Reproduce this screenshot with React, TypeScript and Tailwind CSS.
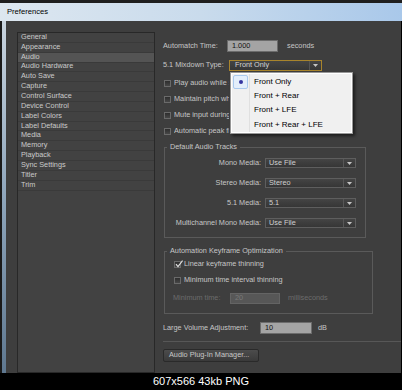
import type { ReactNode } from 'react'

const categories = [
  'General',
  'Appearance',
  'Audio',
  'Audio Hardware',
  'Auto Save',
  'Capture',
  'Control Surface',
  'Device Control',
  'Label Colors',
  'Label Defaults',
  'Media',
  'Memory',
  'Playback',
  'Sync Settings',
  'Titler',
  'Trim',
]

const mixdownOptions = ['Front Only', 'Front + Rear', 'Front + LFE', 'Front + Rear + LFE']

const audioTracks = [
  ['Mono Media:', 'Use File'],
  ['Stereo Media:', 'Stereo'],
  ['5.1 Media:', '5.1'],
  ['Multichannel Mono Media:', 'Use File'],
]

function Arrow() {
  return (
    <svg width="5" height="3" viewBox="0 0 5 3">
      <path d="M0 0H5L2.5 3Z" fill="#c4c4c4" />
    </svg>
  )
}

function Checkbox({ checked = false }: { checked?: boolean }) {
  return (
    <span className="relative block h-[7px] w-[7px] shrink-0 border border-[#6a6a6a] bg-gradient-to-b from-[#2e2e2e] to-[#474747]">
      {checked && (
        <svg className="absolute -top-[2px] left-0" width="8" height="8" viewBox="0 0 8 8">
          <path d="M1 4.2L3 6.6L7.6 0.6" stroke="#e0e0e0" strokeWidth="1.2" fill="none" />
        </svg>
      )}
    </span>
  )
}

function CheckRow({
  label,
  checked,
  className,
  clip,
}: {
  label: string
  checked?: boolean
  className: string
  clip?: boolean
}) {
  return (
    <div className={`flex h-[16px] items-center whitespace-nowrap ${className}`}>
      <Checkbox checked={checked} />
      <span className={`ml-[3px] ${clip ? 'w-[55px] overflow-hidden' : ''}`}>{label}</span>
    </div>
  )
}

function Group({ title, className, children }: { title: string; className: string; children: ReactNode }) {
  return (
    <fieldset className={`ml-[1px] border border-[#5a5a5a] ${className}`}>
      <legend className="ml-[2px] px-[3px] leading-[10px] text-[#c6c6c6]">{title}</legend>
      {children}
    </fieldset>
  )
}

export default function App() {
  return (
    <div className="flex h-[390px] w-[402px] flex-col overflow-hidden bg-black font-['Liberation_Sans',Arial,sans-serif] text-[7.3px] text-[#c6c6c6]">
      <div className="flex h-[373px] flex-col">
        <div className="h-[3px] bg-[#1f1f1f]" />
        <div className="flex h-[18px] items-center bg-gradient-to-r from-[#dde7f0] via-[#c9dbec] to-[#a9c8ea] pl-[7px] pr-[1px]">
          <span className="text-[7.6px] text-black">Preferences</span>
        </div>

        <div className="flex min-h-0 flex-1">
          <div className="flex w-[6px]">
            <div className="w-[2px] bg-[#1a1a1a]" />
            <div className="flex-1 bg-gradient-to-b from-[#c8d4df] via-[#8ea5bb] to-[#5f7890]" />
          </div>

          <div className="flex min-w-0 flex-1 bg-[#3e3e3e]">
            <div className="pl-[11px] pt-[11px]">
              <ul className="h-full w-[138px] border border-[#282828] bg-[#424242] text-[#cacaca]">
                {categories.map((name) => (
                  <li
                    key={name}
                    className={`flex h-[9.85px] items-center border-b border-[#3a3a3a] pl-[3px] ${
                      name === 'Audio' ? 'bg-[#545454]' : ''
                    }`}
                  >
                    {name}
                  </li>
                ))}
              </ul>
            </div>

            <div className="ml-[8px] flex min-w-0 flex-1 flex-col pt-[19px]">
              <div className="flex h-[12px] items-center">
                <span className="w-[64px]">Automatch Time:</span>
                <span className="flex h-[12px] w-[51px] items-center border border-[#6c6c6c] bg-[#a4a4a4] pl-[4px] text-[#111]">
                  1.000
                </span>
                <span className="ml-[9px]">seconds</span>
              </div>

              <div className="mt-[8px] flex h-[11px] items-center">
                <span className="w-[66px]">5.1 Mixdown Type:</span>
                <div className="relative h-[11px] w-[93px]">
                  <div className="flex h-full items-center border border-[#a8842c] bg-gradient-to-b from-[#444] to-[#363636]">
                    <span className="flex-1 pl-[5px] text-[#d4d4d4]">Front Only</span>
                    <span className="h-full w-px bg-[#555]" />
                    <span className="flex w-[11px] justify-center">
                      <Arrow />
                    </span>
                  </div>

                  <div className="absolute left-[1px] top-[12px] z-10 w-[123px] border border-[#979797] bg-[#f0f0f0] shadow-[2px_2px_3px_rgba(0,0,0,0.55)]">
                    <div className="relative border border-white pt-[0.5px] text-[8px] text-black">
                      <span className="absolute bottom-0 left-[17px] top-0 w-px bg-[#e0e0e0]" />
                      {mixdownOptions.map((option, i) => (
                        <div key={option} className="flex h-[14.3px] items-center">
                          <span className="flex h-full w-[17px] px-[1px]">
                            {i === 0 && (
                              <span className="flex h-full w-full items-center justify-center rounded-[2px] border border-[#a9c9ee] bg-[#e3eefb]">
                                <span className="h-[4px] w-[4px] rounded-full bg-[#3434a0]" />
                              </span>
                            )}
                          </span>
                          <span className="pl-[5px]">{option}</span>
                        </div>
                      ))}
                    </div>
                  </div>
                </div>
              </div>

              <div className="mt-[4px]">
                <CheckRow className="pl-[1px]" clip label="Play audio while scrubbing" />
                <CheckRow className="pl-[1px]" clip label="Maintain pitch while shuttling" />
                <CheckRow className="pl-[1px]" clip label="Mute input during timeline recording" />
                <CheckRow className="pl-[1px]" clip label="Automatic peak file generation" />
              </div>

              <Group title="Default Audio Tracks" className="mt-[3px] w-[202px]">
                <div className="flex flex-col gap-[10px] pb-[9px] pt-[6px]">
                  {audioTracks.map(([label, value]) => (
                    <div key={label} className="flex h-[10px] items-center">
                      <span className="w-[96px] whitespace-nowrap text-right">{label}</span>
                      <div className="ml-[4px] flex h-[10px] w-[91px] items-center border border-[#5e5e5e] bg-gradient-to-b from-[#444] to-[#363636]">
                        <span className="flex-1 pl-[3px] text-[#d0d0d0]">{value}</span>
                        <span className="h-full w-px bg-[#565656]" />
                        <span className="flex w-[11px] justify-center">
                          <Arrow />
                        </span>
                      </div>
                    </div>
                  ))}
                </div>
              </Group>

              <Group title="Automation Keyframe Optimization" className="mt-[8px] w-[209px]">
                <div className="pb-[7px]">
                  <CheckRow className="pl-[9px]" label="Linear keyframe thinning" checked />
                  <CheckRow className="pl-[9px]" label="Minimum time interval thinning" />
                  <div className="mt-[2px] flex h-[16px] items-center pl-[8px] text-[#6c6c6c]">
                    <span className="w-[57px]">Minimum time:</span>
                    <span className="flex h-[11px] w-[50px] items-center border border-[#646464] bg-[#575757] pl-[4px] text-[#7a7a7a]">
                      20
                    </span>
                    <span className="ml-[8px]">milliseconds</span>
                  </div>
                </div>
              </Group>

              <div className="mt-[8px] flex h-[12px] items-center">
                <span className="w-[97px]">Large Volume Adjustment:</span>
                <span className="flex h-[12px] w-[52px] items-center border border-[#6c6c6c] bg-[#a4a4a4] pl-[4px] text-[#111]">
                  10
                </span>
                <span className="ml-[6px]">dB</span>
              </div>

              <div className="mt-[7px] h-px bg-[#575757]" />

              <button className="mt-[7px] flex h-[13px] w-[96px] items-center rounded-[2px] border border-[#2a2a2a] bg-gradient-to-b from-[#4c4c4c] to-[#3a3a3a] pl-[5px] text-[#c8c8c8]">
                Audio Plug-In Manager...
              </button>
            </div>
          </div>

          <div className="w-px bg-black" />
        </div>
      </div>

      <div className="flex flex-1 items-center justify-center text-[11px] text-white">607x566 43kb PNG</div>
    </div>
  )
}
